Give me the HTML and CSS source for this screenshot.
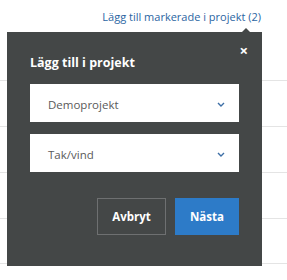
FILE: index.html
```html
<!DOCTYPE html>
<html lang="sv">
<head>
    <meta charset="UTF-8">
    <meta name="viewport" content="width=device-width, initial-scale=1.0">
    <title>Lägg till i projekt</title>
    <link rel="stylesheet" href="styles.css">
</head>
<body>
    <div class="toolbar">
        <a class="add-link" href="#">Lägg till markerade i projekt (2)</a>
    </div>

    <!-- rader i tabellen bakom -->
    <ul class="rows">
        <li></li>
        <li></li>
        <li></li>
        <li></li>
    </ul>

    <div class="popover">
        <span class="popover-arrow"></span>
        <button class="close-btn" type="button">&times;</button>
        <h2>Lägg till i projekt</h2>

        <div class="select-box">
            <span>Demoprojekt</span>
            <svg class="chevron" width="8" height="5" viewBox="0 0 8 5"><path d="M1 1l3 3 3-3" fill="none" stroke="#3d6fa6" stroke-width="1.4"/></svg>
        </div>
        <div class="select-box">
            <span>Tak/vind</span>
            <svg class="chevron" width="8" height="5" viewBox="0 0 8 5"><path d="M1 1l3 3 3-3" fill="none" stroke="#3d6fa6" stroke-width="1.4"/></svg>
        </div>

        <div class="actions">
            <button class="cancel-btn" type="button">Avbryt</button>
            <button class="next-btn" type="button">Nästa</button>
        </div>
    </div>
</body>
</html>
```

FILE: styles.css
```css
* {
    margin: 0;
    padding: 0;
    box-sizing: border-box;
    font-family: 'Open Sans', 'Liberation Sans', sans-serif;
}

body {
    background-color: #fff;
    position: relative;
    width: 287px;
    height: 280px;
    overflow: hidden;
}

.toolbar {
    display: flex;
    justify-content: flex-end;
    padding: 8px 26px 0 0;
    height: 32px;
}

.add-link {
    color: #2b65a2;
    font-size: 11px;
    text-decoration: none;
    line-height: 18px;
}

.rows {
    list-style: none;
    padding-top: 48px;
}

.rows li {
    height: 46px;
    border-top: 1px solid #e4e4e4;
}

.rows li:last-child {
    border-bottom: 1px solid #e4e4e4;
}

.popover {
    position: absolute;
    left: 7px;
    top: 32px;
    width: 255px;
    height: 234px;
    background-color: #444747;
    padding: 22px 23px 0;
}

.popover-arrow {
    position: absolute;
    top: -4px;
    right: 12px;
    width: 0;
    height: 0;
    border-left: 4px solid transparent;
    border-right: 4px solid transparent;
    border-bottom: 4px solid #444747;
}

.close-btn {
    position: absolute;
    top: 11px;
    right: 14px;
    background: none;
    border: none;
    color: #fff;
    font-size: 15px;
    font-weight: bold;
    line-height: 15px;
    cursor: pointer;
}

.popover h2 {
    color: #fff;
    font-size: 12.5px;
    font-weight: bold;
    line-height: 18px;
    margin-bottom: 12px;
}

.select-box {
    background-color: #fff;
    height: 38px;
    display: flex;
    align-items: center;
    justify-content: space-between;
    padding: 2px 14px 0 18px;
    margin-bottom: 12px;
    font-size: 11.5px;
    color: #5a5a5a;
}

.chevron {
    display: block;
}

.actions {
    display: flex;
    justify-content: flex-end;
    gap: 9px;
    margin-top: 26px;
}

.actions button {
    height: 37px;
    font-size: 11.5px;
    font-weight: bold;
    color: #fff;
    cursor: pointer;
}

.cancel-btn {
    width: 69px;
    background: transparent;
    border: 1px solid #6e7071;
}

.next-btn {
    width: 64px;
    background-color: #2d7bc8;
    border: none;
}
```
